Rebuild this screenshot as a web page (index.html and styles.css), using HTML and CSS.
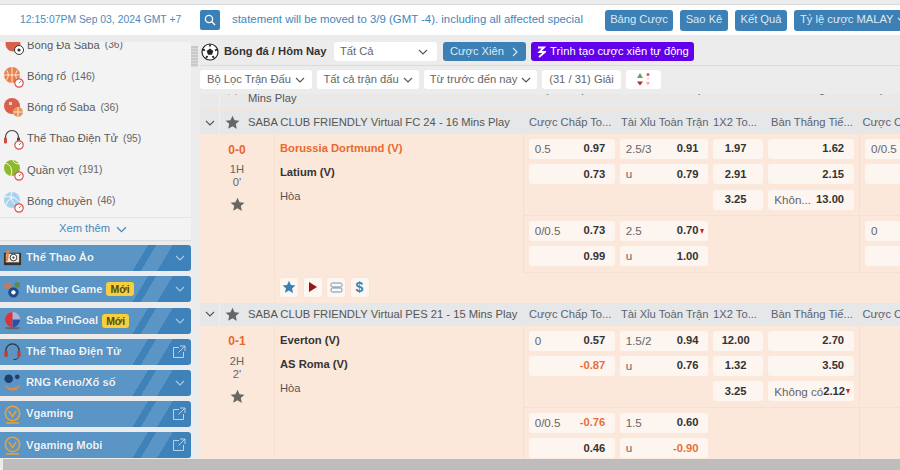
FILE: index.html
```html
<!DOCTYPE html>
<html lang="vi">
<head>
<meta charset="utf-8">
<title>Bóng đá</title>
<link rel="stylesheet" href="styles.css">
</head>
<body>
<svg class="defs" width="0" height="0">
  <symbol id="chev" viewBox="0 0 10 6"><path d="M1 1l4 4 4-4" fill="none" stroke="currentColor" stroke-width="1.1"/></symbol>
  <symbol id="star" viewBox="0 0 16 16"><path d="M8 .8l2.2 4.9 5.2.5-3.9 3.500 1.100 5.300L8 12l-4.600 2.700 1.100-5.300L.6 6.200l5.200-.5z" fill="currentColor"/></symbol>
  <symbol id="ext" viewBox="0 0 14 14"><path d="M7 2.500H1.500v10h10V7M8 1h5v5M13 1L6.500 7.500" fill="none" stroke="currentColor" stroke-width="1"/></symbol>
  <symbol id="clock" viewBox="0 0 10 10"><circle cx="5" cy="5" r="4.200" fill="#fff" stroke="#d9534a" stroke-width="1.200"/><path d="M5 5l1.800-1.800" stroke="#d9534a" stroke-width="1"/></symbol>
  <symbol id="vg" viewBox="0 0 18 18"><circle cx="9" cy="8" r="6.800" fill="none" stroke="#e8a23c" stroke-width="1.500"/><path d="M5.500 5.500L9 11l3.500-5.500" fill="none" stroke="#e8a23c" stroke-width="1.500"/><path d="M3 17h12" stroke="#e8a23c" stroke-width="1.500"/></symbol>
</svg>

<header class="topbar">
  <div class="clock">12:15:07PM Sep 03, 2024 GMT +7</div>
  <button class="search"><svg width="12" height="12" viewBox="0 0 12 12"><circle cx="5" cy="5" r="3.600" fill="none" stroke="#fff" stroke-width="1.300"/><path d="M7.600 7.600L11 11" stroke="#fff" stroke-width="1.400"/></svg></button>
  <div class="marquee">statement will be moved to 3/9 (GMT -4). including all affected special</div>
  <nav class="topnav">
    <a class="tbtn b1">Bảng Cược</a>
    <a class="tbtn b2">Sao Kê</a>
    <a class="tbtn b3">Kết Quả</a>
    <a class="tbtn b4">Tỷ lệ cược MALAY <svg class="ch"><use href="#chev"/></svg></a>
  </nav>
</header>

<div class="body">
  <aside class="side">
    <div class="panel">
      <ul class="sports">
        <li class="sport"><svg class="sic" viewBox="0 0 22 22"><circle cx="10" cy="9" r="7.500" fill="#d9604c"/><circle cx="16" cy="15" r="4.500" fill="#fff" stroke="#333"/><circle cx="16" cy="15" r="1.600" fill="#333"/></svg><span>Bóng Đá Saba</span><em>(36)</em></li>
        <li class="sport"><svg class="sic" viewBox="0 0 22 22"><circle cx="9" cy="9" r="8" fill="#e8814c"/><path d="M1 9h16M9 1v16M3 3.500c3 3 3 8 0 11M15 3.500c-3 3-3 8 0 11" fill="none" stroke="#fff" stroke-width=".8"/><use href="#clock" x="11" y="12" width="10" height="10"/></svg><span>Bóng rổ</span><em>(146)</em></li>
        <li class="sport"><svg class="sic" viewBox="0 0 22 22"><circle cx="9" cy="9" r="8" fill="#d9604c"/><circle cx="15" cy="15" r="5" fill="#e8955c"/><path d="M10 15h10M15 10v10" stroke="#fff" stroke-width=".7"/><path d="M6 5h3v3H6z" fill="#fff" opacity=".7"/></svg><span>Bóng rổ Saba</span><em>(36)</em></li>
        <li class="sport"><svg class="sic" viewBox="0 0 22 22"><path d="M2.500 11V9a6.500 6.500 0 0 1 13 0v2" fill="none" stroke="#444" stroke-width="1.200"/><rect x="1" y="9.500" width="3" height="6" rx="1" fill="#c9503f"/><rect x="14" y="9.500" width="3" height="6" rx="1" fill="#444"/><use href="#clock" x="11" y="12" width="10" height="10"/></svg><span>Thể Thao Điện Tử</span><em>(95)</em></li>
        <li class="sport"><svg class="sic" viewBox="0 0 22 22"><circle cx="9" cy="9" r="8" fill="#8db92e"/><path d="M2 4c5 1 8 6 6 13M16 5c-3 0-6-2-6-4" fill="none" stroke="#fff" stroke-width=".9"/><use href="#clock" x="11" y="12" width="10" height="10"/></svg><span>Quần vợt</span><em>(191)</em></li>
        <li class="sport"><svg class="sic" viewBox="0 0 22 22"><circle cx="9" cy="9" r="8" fill="#a9d3ec"/><path d="M9 1c-2 5-1 9 3 12M2 6c5-1 10 0 14 5M3 14c1-4 4-7 8-8" fill="none" stroke="#fff" stroke-width=".9"/><use href="#clock" x="11" y="12" width="10" height="10"/></svg><span>Bóng chuyền</span><em>(46)</em></li>
      </ul>
      <div class="more">Xem thêm <svg class="ch2"><use href="#chev"/></svg></div>
    </div>
    <div class="cat"><svg class="cic" viewBox="0 0 20 20"><rect x="1" y="4" width="18" height="13" fill="#333"/><rect x="3" y="5" width="14" height="9" fill="#f0e6d8"/><path d="M4 1h3L5 13H3z" fill="#e8823c"/><circle cx="11" cy="9" r="3.500" fill="#fff" stroke="#333"/><circle cx="11" cy="9" r="1.200" fill="#333"/></svg><b>Thể Thao Ảo</b><svg class="cch"><use href="#chev"/></svg></div>
    <div class="cat"><svg class="cic" viewBox="0 0 20 20"><circle cx="5" cy="6" r="3.500" fill="#c77a58"/><circle cx="15" cy="5" r="3" fill="#5c8a4e"/><circle cx="11" cy="13" r="5.500" fill="#1f4a8c"/><circle cx="11" cy="13" r="2.300" fill="#fff"/></svg><b>Number Game</b><i class="new">Mới</i><svg class="cch"><use href="#chev"/></svg></div>
    <div class="cat"><svg class="cic" viewBox="0 0 20 20"><circle cx="10" cy="9" r="8" fill="#a9b8d8"/><path d="M10 1a8 8 0 0 0 0 16z" fill="#d8343c"/><path d="M10 9v8a8 8 0 0 0 8-8z" fill="#2b4fa8"/><ellipse cx="10" cy="18" rx="8" ry="1.200" fill="#666"/></svg><b>Saba PinGoal</b><i class="new">Mới</i><svg class="cch"><use href="#chev"/></svg></div>
    <div class="cat"><svg class="cic" viewBox="0 0 20 20"><path d="M3 11V9a7 7 0 0 1 14 0v2" fill="none" stroke="#333" stroke-width="1.300"/><rect x="1.500" y="9" width="3.500" height="7" rx="1.500" fill="#c23b34"/><rect x="15" y="9" width="3.500" height="7" rx="1.500" fill="#c23b34"/><path d="M16 16c0 2-3 2.500-5 2.500" fill="none" stroke="#333"/></svg><b>Thể Thao Điện Tử</b><svg class="cext"><use href="#ext"/></svg></div>
    <div class="cat"><svg class="cic" viewBox="0 0 20 20"><circle cx="6" cy="6" r="4.500" fill="#1f3f6c"/><circle cx="15" cy="4" r="2.500" fill="#1f3f6c"/><path d="M2 12c3 5 11 5 16 0-1 8-14 9-16 0z" fill="#d98a4c"/></svg><b>RNG Keno/Xổ số</b><svg class="cch"><use href="#chev"/></svg></div>
    <div class="cat"><svg class="cic" viewBox="0 0 18 18"><use href="#vg"/></svg><b>Vgaming</b><svg class="cext"><use href="#ext"/></svg></div>
    <div class="cat"><svg class="cic" viewBox="0 0 18 18"><use href="#vg"/></svg><b>Vgaming Mobi</b><svg class="cext"><use href="#ext"/></svg></div>
  </aside>

  <div class="gutter"><div class="thumb"></div></div>

  <main class="main">
    <div class="crumb">
      <svg class="ball" viewBox="0 0 18 18"><circle cx="9" cy="9" r="8" fill="#fff" stroke="#222" stroke-width="1.200"/><path d="M9 5.500l3.300 2.400-1.300 3.900H7L5.700 7.900z" fill="#222"/><path d="M9 1.500v2M2 6.500l2 1M16 6.500l-2 1M5 15l1.500-2M13 15l-1.500-2" stroke="#222" stroke-width="1.800"/></svg>
      <strong>Bóng đá / Hôm Nay</strong>
      <div class="select">Tất Cả <svg class="ch"><use href="#chev"/></svg></div>
      <a class="parlay">Cược Xiên <svg class="arrow" viewBox="0 0 6 10"><path d="M1 1l4 4-4 4" fill="none" stroke="currentColor" stroke-width="1.100"/></svg></a>
      <a class="auto"><svg width="9" height="12" viewBox="0 0 9 12"><path d="M1 1.500h6L2.500 6 8 6 2 11" fill="none" stroke="#fff" stroke-width="1.800"/></svg>Trình tạo cược xiên tự động</a>
    </div>
    <div class="filters">
      <div class="pill p1">Bộ Lọc Trận Đấu <svg class="ch"><use href="#chev"/></svg></div>
      <div class="pill p2">Tất cả trận đấu <svg class="ch"><use href="#chev"/></svg></div>
      <div class="pill p3">Từ trước đến nay <svg class="ch"><use href="#chev"/></svg></div>
      <div class="pill p4">(31 / 31) Giải</div>
      <div class="pill p5"><svg width="16" height="16" viewBox="0 0 16 16"><path d="M4 1l3 5H1z" fill="#5ba85a"/><path d="M1 9.500h6l-3 4z" fill="#a5302c"/><circle cx="12" cy="2.500" r="1.500" fill="#e2575a"/><circle cx="12" cy="6.500" r="1" fill="#f5cfc5"/><path d="M10 10h4l-2 3.500z" fill="#f2a9a0"/></svg></div>
    </div>

    <section class="table">
      <div class="league stub">
        <div class="l-tog"></div>
        <div class="l-name"><svg class="lstar"><use href="#star"/></svg><span>Mins Play</span></div>
        <div class="l-cols clip">
          <span class="c1">Cược Chấp To...</span><span class="c2">Tài Xỉu Toàn Trận</span><span class="c3">1X2 To...</span><span class="c4">Bàn Thắng Tiế...</span><span class="c5">Cược Chấp</span>
        </div>
      </div>

      <div class="league">
        <div class="l-tog"><svg class="ch"><use href="#chev"/></svg></div>
        <div class="l-name"><svg class="lstar"><use href="#star"/></svg><span>SABA CLUB FRIENDLY Virtual FC 24 - 16 Mins Play</span></div>
        <div class="l-cols">
          <span class="c1">Cược Chấp To...</span><span class="c2">Tài Xỉu Toàn Trận</span><span class="c3">1X2 To...</span><span class="c4">Bàn Thắng Tiế...</span><span class="c5">Cược C</span>
        </div>
      </div>

      <article class="match">
        <div class="score">
          <b>0-0</b><span class="per">1H</span><span class="per">0'</span><svg class="sstar"><use href="#star"/></svg>
        </div>
        <div class="right">
          <div class="row-main">
            <div class="teams">
              <b class="hot">Borussia Dortmund (V)</b><b>Latium (V)</b><span>Hòa</span>
            </div>
            <div class="odds">
              <div class="group">
                <div class="sec">
                  <div class="cell ca"><i>0.5</i><b>0.97</b></div><div class="cell cb"><i>2.5/3</i><b>0.91</b></div><div class="cell cc"><b>1.97</b></div><div class="cell cd"><b>1.62</b></div>
                  <div class="cell ca"><b>0.73</b></div><div class="cell cb"><i>u</i><b>0.79</b></div><div class="cell cc"><b>2.91</b></div><div class="cell cd"><b>2.15</b></div>
                  <div class="ca"></div><div class="cb"></div><div class="cell cc"><b>3.25</b></div><div class="cell cd"><i>Khôn...</i><b>13.00</b></div>
                </div>
                <div class="next"><div class="cell"><i>0/0.5</i></div><div class="cell"></div></div>
              </div>
              <div class="group">
                <div class="sec">
                  <div class="cell ca"><i>0/0.5</i><b>0.73</b></div><div class="cell cb"><i>2.5</i><b>0.70</b><s class="down"></s></div><div class="cc"></div><div class="cd"></div>
                  <div class="cell ca"><b>0.99</b></div><div class="cell cb"><i>u</i><b>1.00</b></div><div class="cc"></div><div class="cd"></div>
                </div>
                <div class="next"><div class="cell"><i>0</i></div><div class="cell"></div></div>
              </div>
            </div>
          </div>
          <div class="actions">
            <a class="act"><svg class="astar"><use href="#star"/></svg></a>
            <a class="act"><svg width="10" height="12" viewBox="0 0 10 12"><path d="M1 1l8 5-8 5z" fill="#9a1414"/></svg></a>
            <a class="act"><svg width="13" height="11" viewBox="0 0 13 11"><rect x="1" y="1" width="11" height="4" rx="1.500" fill="none" stroke="#6d93b5"/><rect x="1" y="6" width="11" height="4" rx="1.500" fill="none" stroke="#6d93b5"/></svg></a>
            <a class="act dollar">$</a>
          </div>
        </div>
      </article>

      <div class="league">
        <div class="l-tog"><svg class="ch"><use href="#chev"/></svg></div>
        <div class="l-name"><svg class="lstar"><use href="#star"/></svg><span>SABA CLUB FRIENDLY Virtual PES 21 - 15 Mins Play</span></div>
        <div class="l-cols">
          <span class="c1">Cược Chấp To...</span><span class="c2">Tài Xỉu Toàn Trận</span><span class="c3">1X2 To...</span><span class="c4">Bàn Thắng Tiế...</span><span class="c5">Cược C</span>
        </div>
      </div>

      <article class="match">
        <div class="score">
          <b>0-1</b><span class="per">2H</span><span class="per">2'</span><svg class="sstar"><use href="#star"/></svg>
        </div>
        <div class="right">
          <div class="row-main">
            <div class="teams">
              <b>Everton (V)</b><b>AS Roma (V)</b><span>Hòa</span>
            </div>
            <div class="odds">
              <div class="group">
                <div class="sec">
                  <div class="cell ca"><i>0</i><b>0.57</b></div><div class="cell cb"><i>1.5/2</i><b>0.94</b></div><div class="cell cc"><b>12.00</b></div><div class="cell cd"><b>2.70</b></div>
                  <div class="cell ca"><b class="neg">-0.87</b></div><div class="cell cb"><i>u</i><b>0.76</b></div><div class="cell cc"><b>1.32</b></div><div class="cell cd"><b>3.50</b></div>
                  <div class="ca"></div><div class="cb"></div><div class="cell cc"><b>3.25</b></div><div class="cell cd"><i>Không có</i><b>2.12</b><s class="down"></s></div>
                </div>
                <div class="next"></div>
              </div>
              <div class="group">
                <div class="sec">
                  <div class="cell ca"><i>0/0.5</i><b class="neg">-0.76</b></div><div class="cell cb"><i>1.5</i><b>0.60</b></div><div class="cc"></div><div class="cd"></div>
                  <div class="cell ca"><b>0.46</b></div><div class="cell cb"><i>u</i><b class="neg">-0.90</b></div><div class="cc"></div><div class="cd"></div>
                </div>
                <div class="next"></div>
              </div>
            </div>
          </div>
        </div>
      </article>
    </section>
  </main>
</div>
<div class="hbar"><div class="hthumb"></div></div>
</body>
</html>
```

FILE: styles.css
```css
* { box-sizing: border-box; }
html, body { margin: 0; padding: 0; }
body {
  width: 900px; height: 470px; overflow: hidden;
  background: #ececec;
  font: 11.2px/1.2 "Liberation Sans", Arial, sans-serif;
  color: #555;
  display: flex; flex-direction: column;
}
.defs { position: absolute; }
svg { display: block; flex: none; }
ul { list-style: none; margin: 0; padding: 0; }
i, em { font-style: normal; }

.ch { width: 10px; height: 6px; color: #555; }

/* top */
.topbar {
  flex: none; height: 31px; margin-top: 4px;
  background: #fff; border-top: 1px solid #d9d9d9;
  display: flex; align-items: center; overflow: hidden;
}
.clock { width: 200px; flex: none; padding-left: 20px; color: #4f8ab8; white-space: nowrap; font-size: 10.4px; }
.search {
  width: 20px; height: 20px; flex: none; border: 0; padding: 0; border-radius: 2px;
  background: #3a7fb5; display: flex; align-items: center; justify-content: center;
}
.marquee { width: 373px; flex: none; margin-left: 12px; color: #3f86ba; white-space: nowrap; overflow: hidden; font-size: 11.4px; }
.topnav { display: flex; gap: 7px; flex: none; }
.tbtn {
  height: 21px; border-radius: 3px; background: #3d80b5; color: #dbe9f3; flex: none;
  display: flex; align-items: center; justify-content: center; gap: 3px; white-space: nowrap;
}
.tbtn .ch { color: #dbe9f3; }
.b1 { width: 68px; }
.b2 { width: 48px; }
.b3 { width: 52px; }
.b4 { width: 112px; justify-content: flex-start; padding-left: 6px; }

.body { flex: none; height: 417px; margin-top: 7px; display: flex; }

/* sidebar */
.side { width: 191px; flex: none; overflow: hidden; display: flex; flex-direction: column; gap: 5.2px; }
.panel { height: 198px; flex: none; background: #f3f3f3; overflow: hidden; box-shadow: 0 1px 1px #ddd; }
.sports { margin-top: -12px; }
.sport { height: 31.2px; display: flex; align-items: center; color: #5a5a5a; padding-left: 3px; white-space: nowrap; }
.sport .sic { width: 22px; height: 22px; margin-right: 2px; }
.sport em { margin-left: 5px; font-size: 10.2px; color: #666; }
.more {
  height: 23px; border-top: 1px solid #e4e4e4;
  display: flex; align-items: center; justify-content: center; gap: 6px; color: #4a88b8; padding-right: 5px;
}
.ch2 { width: 11px; height: 7px; color: #4a88b8; }

.cat {
  flex: none; height: 26px; border-radius: 0 3px 3px 0; padding-left: 3px;
  display: flex; align-items: center; color: #eef4f9; white-space: nowrap;
  background: linear-gradient(121deg, #5b95c5 0, #5b95c5 127px, #3f82b9 127px, #3f82b9 134px, #5b95c5 134px, #5b95c5 148px, #3f82b9 148px);
}
.cat b { margin-left: 4px; font-size: 11.2px; text-shadow: 0 0 1px #3a76a6; }
.cic { width: 19px; height: 19px; }
.new {
  margin-left: 4px; padding: 0 4px; height: 14px; line-height: 14px; border-radius: 3px;
  background: #f6cf3d; color: #5a4a10; font-weight: bold; font-size: 10.5px;
}
.cch { width: 10px; height: 6px; margin-left: auto; margin-right: 6px; color: #a9cbe4; }
.cext { width: 14px; height: 14px; margin-left: auto; margin-right: 5px; color: #b5d3ea; }

.gutter { width: 9px; flex: none; }
.thumb { width: 7px; height: 21px; margin-top: 4px; background: repeating-linear-gradient(#c9c9c9 0 2px, #dadada 2px 3px); }

/* main */
.main { width: 700px; flex: none; display: flex; flex-direction: column; overflow: hidden; }
.crumb {
  flex: none; height: 24px; display: flex; align-items: flex-start; border-bottom: 1px solid #dcdcdc;
}
.ball { width: 18px; height: 18px; margin: 1px 0 0 1px; }
.crumb strong { width: 110px; margin-left: 5px; color: #333; line-height: 18px; white-space: nowrap; }
.select {
  width: 103px; height: 19px; background: #fff; border-radius: 3px; color: #666; padding: 0 9px 0 6px;
  display: flex; align-items: center; justify-content: space-between;
}
.parlay {
  width: 83px; height: 19px; margin-left: 6px; border-radius: 3px; background: #3d80b5; color: #dceaf4;
  display: flex; align-items: center; justify-content: space-between; padding: 0 8px 0 7px;
}
.arrow { width: 6px; height: 10px; }
.auto {
  width: 163px; height: 19px; margin-left: 5px; border-radius: 3px; background: #6200ea; color: #fff;
  display: flex; align-items: center; gap: 4px; padding-left: 6px; white-space: nowrap;
}
.filters { flex: none; height: 28px; padding-top: 4px; display: flex; gap: 5px; }
.pill {
  height: 19px; background: #fff; border-radius: 3px; color: #666; white-space: nowrap;
  display: flex; align-items: center; justify-content: center; gap: 4px;
}
.p1 { width: 112px; }
.p2 { width: 102px; }
.p3 { width: 113px; }
.p4 { width: 79px; }
.p5 { width: 35px; }

.table { flex: none; height: 365px; overflow: hidden; }
.league { height: 23px; display: flex; background: #e6e7e8; align-items: stretch; white-space: nowrap; }
.l-tog { width: 20px; flex: none; display: flex; align-items: center; justify-content: center; border-right: 1px solid #f0f0f0; }
.l-name { width: 303px; flex: none; display: flex; align-items: center; padding-left: 5px; color: #555; }
.lstar { width: 15px; height: 15px; color: #666; margin-right: 8px; }
.l-cols { flex: 1; display: flex; align-items: center; overflow: hidden; color: #5a6470; }
.l-cols span { flex: none; }
.c1 { width: 92px; padding-left: 6px; }
.c2 { width: 92px; padding-left: 6px; }
.c3 { width: 56px; padding-left: 6px; }
.c4 { width: 96.500px; padding-left: 8px; }
.c5 { padding-left: 2px; border-left: 1px solid #f0e6dc; }

.stub { height: 17px; background: #e9e9e9; border-bottom: 1px solid #f2e6dc; overflow: hidden; }
.stub .l-name { align-items: flex-end; }
.stub .lstar { margin-top: -13px; align-self: flex-start; }
.stub .l-name span { margin-bottom: 5px; }
.clip { align-items: flex-start; }
.clip span { margin-top: -11px; }

.match { display: flex; background: #fce8da; }
.score { width: 74px; flex: none; display: flex; flex-direction: column; align-items: center; padding-top: 8.600px; color: #666; }
.score b { color: #e8682c; font-size: 12px; line-height: 15px; margin-bottom: 5.400px; }
.per { line-height: 13.500px; }
.sstar { width: 15px; height: 15px; color: #666; margin-top: 7px; }
.right { flex: 1; border-left: 1px solid #f6e0d0; min-width: 0; }
.row-main { display: flex; }
.teams { width: 248px; flex: none; padding: 7px 0 0 5px; display: flex; flex-direction: column; color: #555; }
.teams > * { height: 24.100px; line-height: 15px; }
.teams b { color: #333; }
.teams .hot { color: #e8682c; }
.odds { flex: 1; border-left: 1px solid #f6e0d0; min-width: 0; }
.group { display: flex; border-bottom: 1px solid #f6e0d0; }
.sec {
  width: 336px; flex: none; padding: 5px 4px 5.500px 4.700px; border-right: 1px solid #f6e0d0;
  display: grid; grid-template-columns: 86px 88.300px 50.300px 85.300px; gap: 5.300px 5px; grid-auto-rows: 20px; align-content: start;
}
.next { flex: 1; padding: 5px 0 0 5px; display: flex; flex-direction: column; gap: 5.300px; }
.next .cell { width: 100px; }
.cell {
  height: 20px; background: #fdf5f0; border-radius: 3px; position: relative;
  display: flex; align-items: center; justify-content: space-between; padding: 0 9.500px 0 6px; white-space: nowrap;
}
.cell i { color: #666; font-size: 11.600px; }
.cell b { color: #333; margin-left: auto; font-size: 11.200px; }
.cell b.neg { color: #e8703a; }
.cell.cc { justify-content: center; padding: 0 5px 0 0; }
.cc b { margin: 0; }
.down {
  position: absolute; right: 3.500px; top: 8px; width: 0; height: 0;
  border: 2.500px solid transparent; border-top: 5px solid #e0202a; border-bottom: 0;
}
.actions { height: 30px; padding: 5px 0 0 5px; display: flex; gap: 5.500px; }
.act {
  width: 18px; height: 19px; background: #fdf6f1; border-radius: 2px; box-shadow: 0 0 1px #e8d8cc;
  display: flex; align-items: center; justify-content: center;
}
.astar { width: 14px; height: 14px; color: #3a80b8; }
.dollar { color: #3a80b8; font-weight: bold; font-size: 14px; }

.hbar { flex: 1; padding-left: 3px; }
.hthumb { height: 100%; background: #bdbdbd; }
```
